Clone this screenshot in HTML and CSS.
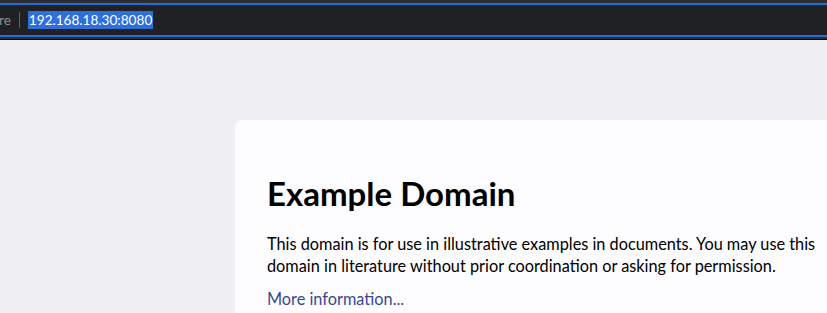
FILE: index.html
```html
<!DOCTYPE html>
<html lang="en">
<head>
  <meta charset="UTF-8">
  <meta name="viewport" content="width=device-width, initial-scale=1.0">
  <title>Example Domain</title>
  <link rel="stylesheet" href="styles.css">
</head>
<body>
  <!-- Browser address bar -->
  <header class="toolbar">
    <div class="urlbar">
      <span class="scheme">re</span>
      <span class="divider"></span>
      <span class="url">192.168.18.30:8080</span>
    </div>
  </header>

  <main class="viewport">
    <div class="card">
      <h1>Example Domain</h1>
      <p class="lead">This domain is for use in illustrative examples in documents. You may use this
      domain in literature without prior coordination or asking for permission.</p>
      <p class="more"><a href="#">More information...</a></p>
    </div>
  </main>
</body>
</html>
```

FILE: styles.css
```css
html, body {
  margin: 0;
  padding: 0;
  height: 100%;
  overflow: hidden;
}

body {
  background-color: #f0f0f2;
  font-family: Lato, "Noto Sans", sans-serif;
}

.toolbar {
  height: 40px;
  box-sizing: border-box;
  background-color: #2b2c30;
  padding-top: 3px;
  border-bottom: 1px solid #0c0c0d;
}

.urlbar {
  height: 34px;
  box-sizing: border-box;
  background-color: #202124;
  border-top: 2px solid #1f6fdc;
  border-bottom: 2px solid #1f6fdc;
  display: flex;
  align-items: center;
  font-size: 13.6px;
}

.scheme {
  color: #8d8e93;
  margin-left: -1px;
}

.divider {
  width: 1px;
  height: 16px;
  background-color: #5f6064;
  margin: 0 8px;
}

.url {
  background-color: #2e6fdc;
  color: #ffffff;
  line-height: 18px;
  padding: 0 1px;
}

.viewport {
  padding: 80px 0 0 235px;
}

.card {
  width: 600px;
  padding: 32px;
  background-color: #fdfdff;
  border-radius: 8px;
  color: #000;
}

.card h1 {
  font-size: 33px;
  margin: 21px 0 20px;
}

.card p {
  font-size: 16.3px;
  line-height: 22px;
  margin: 16px 0;
}

.card .lead {
  max-width: 560px;
  margin-bottom: 11px;
}

.card .more {
  margin-top: 0;
}

.card a {
  color: #38488f;
  text-decoration: none;
}
```
